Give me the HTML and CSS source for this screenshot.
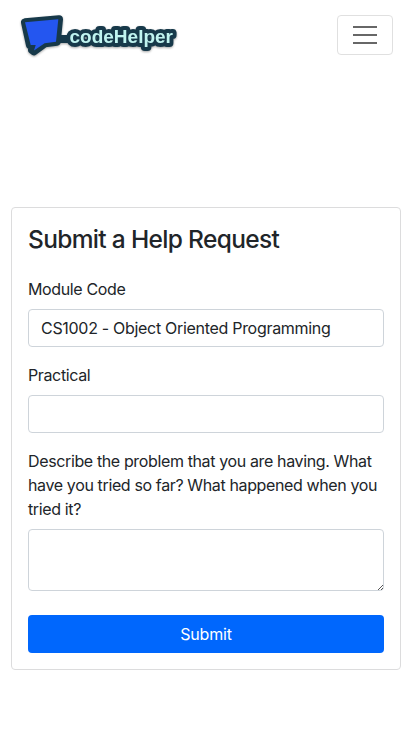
FILE: index.html
```html
<!DOCTYPE html>
<html lang="en">
<head>
<meta charset="utf-8">
<title>codeHelper</title>
<link rel="stylesheet" href="styles.css">
</head>
<body>
<header class="navbar">
  <a class="brand" aria-label="codeHelper">
    <svg class="logo" width="168" height="50" viewBox="0 0 168 50">
      <g class="logo-outline">
        <path d="M8 12.300 L42 9.300 L39.800 31.700 L28 33.300 L17 41.300 L15 40 L16 36 L13 35.500 Z"/>
        <path d="M40 29 H58"/>
        <text x="52.500" y="33" textLength="103.500" lengthAdjust="spacingAndGlyphs">codeHelper</text>
      </g>
      <path class="bubble" d="M8 12.300 L41.300 9.300 L39 31.700 L27.600 33.300 L17 40.500 L18.700 35 L13.700 35 Z"/>
      <text class="wordmark" x="52.500" y="33" textLength="103.500" lengthAdjust="spacingAndGlyphs">codeHelper</text>
    </svg>
  </a>
  <button class="toggler" type="button" aria-label="Toggle navigation">
    <svg width="30" height="30" viewBox="0 0 30 30"><path d="M3 7h24M3 15h24M3 23h24"/></svg>
  </button>
</header>
<main class="card">
  <h1 class="title">Submit a Help Request</h1>
  <form>
    <div class="field">
      <label for="module">Module Code</label>
      <input class="control" id="module" type="text" value="CS1002 - Object Oriented Programming">
    </div>
    <div class="field">
      <label for="practical">Practical</label>
      <input class="control" id="practical" type="text">
    </div>
    <div class="field last">
      <label for="problem">Describe the problem that you are having. What have you tried so far? What happened when you tried it?</label>
      <textarea class="control" id="problem" rows="2"></textarea>
    </div>
    <button class="submit" type="button">Submit</button>
  </form>
</main>
</body>
</html>
```
FILE: styles.css
```css
* { box-sizing: border-box; }
body {
  margin: 0;
  background: #fff;
  color: #212529;
  font: 400 16px/24px Inter, "Liberation Sans", sans-serif;
}
.navbar {
  display: flex;
  justify-content: space-between;
  align-items: center;
  height: 70px;
  padding: 0 20px 0 17px;
}
.brand { display: flex; }
.logo { overflow: visible; filter: drop-shadow(0 1px 1px rgba(0, 0, 0, .35)); }
.logo text { font: 700 19px "Liberation Sans", sans-serif; }
.logo-outline { fill: #17394a; stroke: #17394a; stroke-width: 8; stroke-linejoin: round; }
.bubble { fill: #2456f0; }
.logo .wordmark { fill: #c0f4f0; }
.toggler {
  display: flex;
  align-items: center;
  justify-content: center;
  width: 56px;
  height: 40px;
  padding: 0;
  border: 1px solid #e0e0e0;
  border-radius: 4px;
  background: none;
}
.toggler path { stroke: #676767; stroke-width: 2; fill: none; }
.card {
  width: 390px;
  margin: 137px auto 0 11px;
  padding: 16px;
  border: 1px solid #dcdcdd;
  border-radius: 4px;
}
.title {
  margin: 0 0 23px;
  padding-top: 1px;
  font-size: 24.5px;
  font-weight: 500;
  line-height: 29px;
  letter-spacing: -.67px;
}
.field { margin-bottom: 16px; }
.field.last { margin-bottom: 24px; }
label { display: block; margin-bottom: 8px; letter-spacing: -.37px; }
.control {
  display: block;
  width: 100%;
  height: 38px;
  padding: 6px 12px;
  border: 1px solid #ced4da;
  border-radius: 4px;
  background: #fff;
  color: #212529;
  font: inherit;
  letter-spacing: -.3px;
}
textarea.control { height: 62px; resize: vertical; }
textarea.control::-webkit-resizer {
  background: linear-gradient(135deg, transparent 76%, #555 76% 81%, transparent 81% 89%, #555 89% 94%, transparent 94%) right bottom / 12px 12px no-repeat;
}
.submit {
  display: block;
  width: 100%;
  height: 38px;
  padding: 0;
  border: 0;
  border-radius: 4px;
  background: #0067fd;
  color: #fff;
  font: inherit;
  letter-spacing: -.2px;
}
```
